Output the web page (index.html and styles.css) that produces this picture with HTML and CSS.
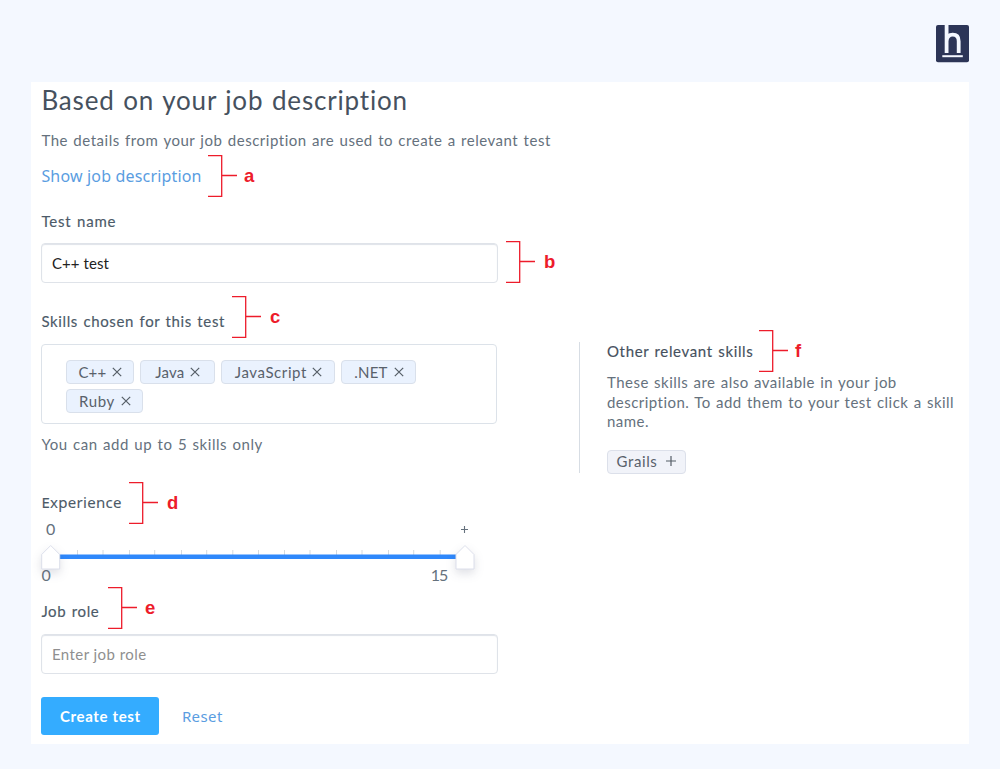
FILE: index.html
```html
<!DOCTYPE html>
<html lang="en">
<head>
<meta charset="utf-8">
<title>Create test</title>
<link rel="stylesheet" href="styles.css">
</head>
<body>
<header class="top">
  <svg class="logo" width="33" height="38" viewBox="0 0 33 38" fill="none">
    <rect width="33" height="37.3" rx="2" fill="#2c3557"/>
    <path d="M10.6 0V28M10.6 16C11 11.5 13.5 9.7 16.7 9.7C20.6 9.7 22.7 11.8 22.7 16.2V28" stroke="#f4f8ff" stroke-width="3.8"/>
    <path d="M6.3 31.2H26.8" stroke="#f4f8ff" stroke-width="2"/>
  </svg>
</header>
<main class="panel">
  <form class="form">
    <h1 class="title">Based on your job description</h1>
    <p class="intro">The details from your job description are used to create a relevant test</p>
    <div class="showrow"><a class="link show">Show job description</a></div>
    <label class="label name">Test name</label>
    <input class="field" type="text" value="C++ test">
    <label class="label skills-label">Skills chosen for this test</label>
    <div class="skills">
      <span class="chip w68"><span>C++</span><svg width="10" height="10"><path d="M.8 .8L9.2 9.2M9.2 .8L.8 9.2"/></svg></span>
      <span class="chip w75"><span>Java</span><svg width="10" height="10"><path d="M.8 .8L9.2 9.2M9.2 .8L.8 9.2"/></svg></span>
      <span class="chip w114"><span>JavaScript</span><svg width="10" height="10"><path d="M.8 .8L9.2 9.2M9.2 .8L.8 9.2"/></svg></span>
      <span class="chip w75"><span>.NET</span><svg width="10" height="10"><path d="M.8 .8L9.2 9.2M9.2 .8L.8 9.2"/></svg></span>
      <span class="chip w77"><span>Ruby</span><svg width="10" height="10"><path d="M.8 .8L9.2 9.2M9.2 .8L.8 9.2"/></svg></span>
    </div>
    <p class="hint">You can add up to 5 skills only</p>
    <label class="label experience">Experience</label>
    <div class="slider">
      <div class="values"><span>0</span><svg class="plus" width="7" height="7"><path d="M3.5 0V7M0 3.5H7"/></svg></div>
      <svg class="track" width="450" height="22" viewBox="0 0 450 22">
        <path d="M36.5 7v5M62 7v5M88.500 7v5M113.700 7v5M140.500 7v5M165.700 7v5M191.800 7v5M217.500 7v5M243.500 7v5M269 7v5M295.500 7v5M321 7v5M347.500 7v5M372.700 7v5M399.200 7v5" stroke="#d5dadf"/>
        <path d="M10 13.800H424" stroke="#2f88fb" stroke-width="4.600"/>
        <path class="thumb" d="M.700 11.500L9.700 2.500L18.700 11.500V26H.700Z"/>
        <path class="thumb" d="M415 11.500L424 2.500L433 11.500V26H415Z"/>
      </svg>
      <div class="limits"><span>0</span><span class="max">15</span></div>
    </div>
    <label class="label role">Job role</label>
    <input class="field" type="text" placeholder="Enter job role">
    <div class="actions"><button class="create" type="button">Create test</button><a class="link reset">Reset</a></div>
  </form>
  <aside class="other">
    <h2 class="other-title">Other relevant skills</h2>
    <p class="other-text">These skills are also available in your job<br>description. To add them to your test click a skill<br>name.</p>
    <span class="chip add"><span>Grails</span><svg width="10" height="10"><path d="M5 0V10M0 5H10"/></svg></span>
  </aside>
</main>
<div class="callout a"><svg width="30" height="42"><path d="M0 .700H13.700V41.300H0M13.700 20.500H29"/></svg><b>a</b></div>
<div class="callout b"><svg width="30" height="42"><path d="M0 .700H13.700V41.300H0M13.700 20.500H29"/></svg><b>b</b></div>
<div class="callout c"><svg width="30" height="42"><path d="M0 .700H13.700V41.300H0M13.700 20.500H29"/></svg><b>c</b></div>
<div class="callout d"><svg width="30" height="42"><path d="M0 .700H13.700V41.300H0M13.700 20.500H29"/></svg><b>d</b></div>
<div class="callout e"><svg width="30" height="42"><path d="M0 .700H13.700V41.300H0M13.700 20.500H29"/></svg><b>e</b></div>
<div class="callout f"><svg width="30" height="42"><path d="M0 .700H13.700V41.300H0M13.700 20.500H29"/></svg><b>f</b></div>
</body>
</html>
```
FILE: styles.css
```css
* { box-sizing: border-box; }
body { margin: 0; height: 769px; overflow: hidden; position: relative; background: #f4f8ff; font: 15px/26px Lato, "Noto Sans", sans-serif; color: #65717d; }
h1, h2, p { margin: 0; font-weight: 400; white-space: nowrap; }
svg { display: block; flex: none; }
.top { height: 82px; display: flex; justify-content: flex-end; padding: 25px 31px 0 0; }
.panel { display: flex; margin: 0 31px; height: 662px; background: #fff; padding-left: 10.4px; }
.form { width: 457px; display: flex; flex-direction: column; }
.title { font-size: 26px; line-height: 36px; letter-spacing: .82px; word-spacing: 1.2px; color: #46515e; }
.intro { margin-top: 9px; letter-spacing: .52px; word-spacing: 1px; }
.showrow { height: 26px; margin-top: 10px; line-height: 26px; }
.link { font-family: "Noto Sans", sans-serif; font-size: 16px; color: #5a9de1; }
.show { letter-spacing: .17px; }
.label { height: 26px; color: #4c5a68; font-weight: 400; letter-spacing: .63px; word-spacing: 1px; -webkit-text-stroke: .15px #4c5a68; }
.name { margin: 19px 0 9px; letter-spacing: .8px; }
.field { width: 457px; height: 40px; border: 1px solid #dfe3e9; border-radius: 4px; box-shadow: inset 0 1px 1px #dfe3e9; padding: 0 10px 1px 9.500px; font: 15px Lato, sans-serif; letter-spacing: .1px; color: #222; outline: 0; background: #fff; }
.field::placeholder { color: #8f8f8f; opacity: 1; letter-spacing: .45px; }
.skills-label { margin: 25px 0 10px; }
.skills { width: 456px; height: 80px; border: 1px solid #dce2e9; border-radius: 4px; padding: 15px 24px; display: flex; flex-wrap: wrap; align-content: flex-start; gap: 5px 6px; }
.chip { display: flex; align-items: center; justify-content: center; gap: 6px; height: 24px; border: 1px solid #d9e0eb; border-radius: 4px; background: #eaf2fe; color: #59616b; font-size: 15px; line-height: 22px; padding-bottom: 1px; letter-spacing: .2px; }
.chip svg { stroke: #555e67; stroke-width: 1.2; fill: none; }
.w68 { width: 68px; }
.w75 { width: 75px; }
.w114 { width: 114px; letter-spacing: .6px; gap: 5px; }
.w77 { width: 77px; letter-spacing: .6px; }
.hint { margin-top: 7px; letter-spacing: .55px; word-spacing: 1px; }
.experience { margin-top: 32px; font-family: "Noto Sans", sans-serif; letter-spacing: .3px; -webkit-text-stroke: .1px #4c5a68; }
.slider { height: 70px; margin-top: 4px; }
.values { display: flex; justify-content: space-between; width: 427px; height: 24px; padding-left: 4.500px; line-height: 20px; font-size: 16px; }
.plus { margin-top: 7px; stroke: #65717d; stroke-width: 1.1; }
.track { overflow: visible; }
.thumb { fill: #fff; stroke: #dcdfeb; filter: drop-shadow(0 4px 5px rgba(40,50,80,.15)); }
.limits { display: flex; justify-content: space-between; width: 407px; line-height: 19px; font-size: 16px; position: relative; }
.max { letter-spacing: -1px; padding-right: 1px; }
.role { margin: 9px 0 10px; }
.actions { display: flex; align-items: center; gap: 22.500px; margin-top: 23px; }
.create { width: 118px; height: 38px; border: 0; border-radius: 3px; background: #34acff; color: #fff; font: 700 15px Lato, sans-serif; letter-spacing: .65px; padding: 0 0 1px; }
.reset { font-size: 15px; letter-spacing: .4px; }
.other { width: 380px; height: 131px; margin: 260px 0 0 80.600px; padding-left: 27px; border-left: 1px solid #d7dde4; line-height: 19.5px; }
.other-title { font-size: 15px; line-height: 19px; color: #46515e; letter-spacing: .65px; word-spacing: 1px; -webkit-text-stroke: .15px #46515e; }
.other-text { margin-top: 12px; letter-spacing: .47px; word-spacing: 1px; }
.add { width: 79px; margin-top: 18px; background: #f1f3f9; border-color: #dce0ea; gap: 9px; letter-spacing: .6px; }
.callout { position: absolute; display: flex; align-items: center; height: 42px; gap: 6px; color: #ed1c2b; font: 700 18.500px/41px "Liberation Sans", sans-serif; }
.callout svg { fill: none; stroke: #ed1c2b; stroke-width: 1.3; }
.callout b { height: 42px; }
.a { left: 208px; top: 155px; }
.b { left: 506px; top: 240.500px; gap: 8px; }
.c { left: 232px; top: 296px; gap: 8px; }
.d { left: 129px; top: 482px; gap: 8px; }
.e { left: 108px; top: 587px; gap: 7px; }
.f { left: 759px; top: 329.500px; }
```
